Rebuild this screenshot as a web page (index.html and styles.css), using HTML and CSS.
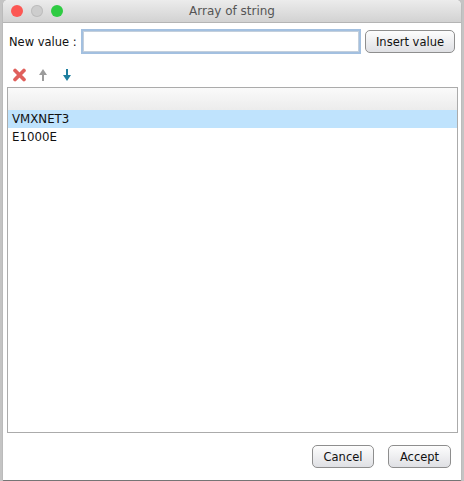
FILE: index.html
```html
<!DOCTYPE html>
<html lang="en">
<head>
    <meta charset="UTF-8">
    <title>Array of string</title>
    <link rel="stylesheet" href="styles.css">
</head>
<body>
    <div class="window">
        <div class="titlebar">
            <div class="lights">
                <span class="light light-close"></span>
                <span class="light light-min"></span>
                <span class="light light-max"></span>
            </div>
            <div class="title">Array of string</div>
        </div>
        <div class="content">
            <div class="input-row">
                <label class="input-label">New value :</label>
                <div class="value-input"></div>
                <button class="btn btn-insert">Insert value</button>
            </div>
            <div class="toolbar">
                <svg class="icon" width="13" height="14" viewBox="0 0 14 14">
                    <path d="M2.2 2.2 L11.8 11.8 M11.8 2.2 L2.2 11.8" stroke="#e0605c" stroke-width="4" stroke-linecap="round"/>
                </svg>
                <svg class="icon icon-up" width="10" height="12" viewBox="0 0 10 12">
                    <path d="M5 0 L9 6 L6 6 L6 12 L4 12 L4 6 L1 6 Z" fill="#9c9c9c"/>
                </svg>
                <svg class="icon icon-down" width="10" height="12" viewBox="0 0 10 12">
                    <path d="M4 0 L6 0 L6 6 L9 6 L5 12 L1 6 L4 6 Z" fill="#1f7f9f"/>
                </svg>
            </div>
            <div class="table">
                <div class="table-header"></div>
                <div class="table-row selected">VMXNET3</div>
                <div class="table-row">E1000E</div>
            </div>
            <div class="footer">
                <button class="btn btn-cancel">Cancel</button>
                <button class="btn btn-accept">Accept</button>
            </div>
        </div>
    </div>
</body>
</html>
```

FILE: styles.css
```css
html, body {
    height: 100%;
}
body {
    margin: 0;
    padding: 0 3px;
    box-sizing: border-box;
    background: #c4c4c4;
    font-family: "DejaVu Sans", sans-serif;
    font-size: 11.5px;
    color: #111;
    overflow: hidden;
}
.window {
    height: 480px;
    background: #fff;
    border-radius: 5px 5px 0 0;
    box-shadow: 0 1px 1px rgba(0,0,0,0.45);
    display: flex;
    flex-direction: column;
}
.titlebar {
    height: 22px;
    flex: none;
    background: linear-gradient(#ececec, #d2d2d2);
    border-bottom: 1px solid #b4b4b4;
    border-radius: 5px 5px 0 0;
    display: flex;
    align-items: center;
}
.lights {
    display: flex;
    gap: 8px;
    padding-left: 8px;
    width: 0;
    margin-right: -8px;
}
.light {
    width: 12px;
    height: 12px;
    flex: none;
    border-radius: 50%;
}
.light-close {
    background: #fc5753;
}
.light-min {
    background: #cdcdcd;
    box-shadow: inset 0 0 0 1px #bdbdbd;
}
.light-max {
    background: #2ecb42;
}
.title {
    flex: 1;
    text-align: center;
    font-size: 12px;
    color: #555;
}
.content {
    flex: 1;
    display: flex;
    flex-direction: column;
    padding: 6px 3px 12px 4px;
    min-height: 0;
}
.input-row {
    display: flex;
    align-items: center;
    padding-left: 2px;
}
.input-label {
    width: 72px;
    flex: none;
}
.value-input {
    flex: 1;
    height: 25px;
    box-sizing: border-box;
    background: #fff;
    border: 2px solid #a3c0e0;
    box-shadow: inset 0 0 0 1px #c3cfdc;
}
.btn {
    height: 23px;
    padding: 0;
    background: linear-gradient(#fdfdfd, #dfe0e4);
    border: 1px solid #8e8e8e;
    border-radius: 5px;
    font-family: inherit;
    font-size: 11.5px;
    color: #111;
}
.btn-insert {
    width: 90px;
    margin: 0 3px 0 4px;
}
.toolbar {
    display: flex;
    align-items: center;
    height: 18px;
    margin-top: 12px;
    padding-left: 6px;
}
.icon {
    flex: none;
    display: block;
}
.icon-up {
    margin-left: 12px;
}
.icon-down {
    margin-left: 14px;
}
.table {
    flex: 1;
    margin-top: 3px;
    border: 1px solid #ababab;
    min-height: 0;
}
.table-header {
    height: 22px;
    background: linear-gradient(#fafafa, #ececec);
}
.table-row {
    height: 18px;
    line-height: 18px;
    padding-left: 4px;
    font-size: 11.8px;
}
.selected {
    background: #bfe3fd;
}
.footer {
    flex: none;
    display: flex;
    justify-content: flex-end;
    gap: 14px;
    margin-top: 12px;
    padding-right: 7px;
}
.btn-cancel {
    width: 62px;
}
.btn-accept {
    width: 63px;
}
```
